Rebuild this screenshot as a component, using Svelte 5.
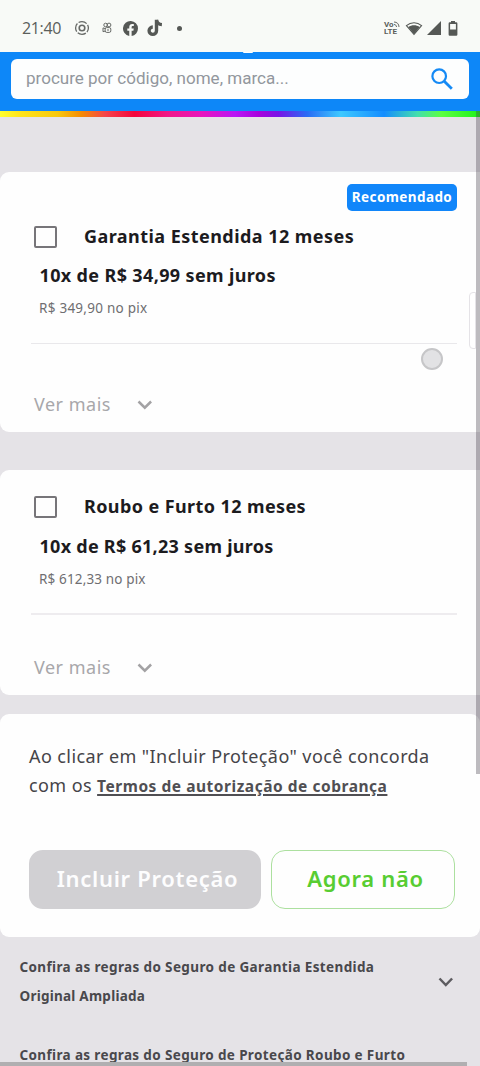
<script>
  const plans = [
    { title: 'Garantia Estendida 12 meses', price: '10x de R$ 34,99 sem juros', pix: 'R$ 349,90 no pix', tag: 'Recomendado', key: 'warranty' },
    { title: 'Roubo e Furto 12 meses', price: '10x de R$ 61,23 sem juros', pix: 'R$ 612,33 no pix', tag: '', key: 'theft' }
  ];
</script>

<div class="screen">
  <div class="status">
    <span class="time">21:40</span>
    <svg class="ring" width="16" height="16" viewBox="0 0 16 16" fill="none" stroke="#666966" stroke-width="1.3">
      <circle cx="8" cy="8" r="6.4" stroke-dasharray="8.6 1.45" stroke-dashoffset="4.3" />
      <circle cx="8" cy="8" r="2.8" stroke-width="1.6" />
    </svg>
    <svg class="kwai" width="10" height="12" viewBox="0 0 10 12" fill="none" stroke="#666966" stroke-width="1">
      <circle cx="3.6" cy="3" r="1.8" /><circle cx="7" cy="3" r="1.9" />
      <rect x="3.2" y="5.6" width="5.6" height="4.8" rx="1.5" /><path d="M3 6.5 1 5.9v3.8l2-.6M5 8h2" />
    </svg>
    <svg class="fb" width="15" height="15" viewBox="0 0 24 24" fill="#555855">
      <path d="M24 12a12 12 0 1 0-14 11.9v-8.4H6.9V12H10V9.4c0-3 1.8-4.7 4.6-4.7 1.3 0 2.7.2 2.7.2v3h-1.5c-1.5 0-2 .9-2 1.9V12h3.4l-.6 3.5h-2.8v8.4A12 12 0 0 0 24 12z" />
    </svg>
    <svg class="tiktok" width="16" height="18" viewBox="0 0 16 18" fill="none" stroke="#555855">
      <path d="M9.500 .8v10.900a3.700 3.700 0 1 1-3.700-3.700" stroke-width="3.400" />
      <path d="M9.500 1c.4 2.800 2.500 4.500 5.400 4.700" stroke-width="3.300" />
    </svg>
    <i class="dot"></i>
    <span class="volte"><span>Vo<svg width="6" height="6" viewBox="0 0 6 6" fill="none" stroke="#666966"><path d="M0 1c3 0 5 2 5 5M0 3.500c1.500 0 2.500 1 2.500 2.500" /></svg></span><span>LTE</span></span>
    <svg class="wifi" width="18" height="15" viewBox="0 0 18 15">
      <path d="M1.400 4.600c4.600-3.900 10.600-3.900 15.200 0L9 13.400z" fill="none" stroke="#555855" stroke-width="1.100" />
      <path d="M3.200 5.900c3.600-2.300 8-2.300 11.600 0L9 13z" fill="#555855" />
    </svg>
    <svg class="signal" width="14" height="14" viewBox="0 0 14 14"><path d="M14 0v14H0z" fill="#555855" /></svg>
    <svg class="battery" width="10" height="15" viewBox="0 0 10 15" fill="#555855">
      <path fill-rule="evenodd" d="M3 0h4v1.300h1.200q1.200 0 1.200 1.200v11q0 1.200-1.200 1.200H1.800q-1.200 0-1.200-1.200v-11q0-1.200 1.200-1.200H3zM2.100 2.900v5.700h5.800V2.900z" />
    </svg>
  </div>

  <header>
    <i class="nub"></i>
    <div class="search">
      <span>procure por código, nome, marca...</span>
      <svg width="22" height="22" viewBox="0 0 22 22" fill="none" stroke="#158af5">
        <circle cx="8.200" cy="8.200" r="6.800" stroke-width="2.200" /><path d="m13 13 7.800 7.800" stroke-width="2.800" />
      </svg>
    </div>
  </header>
  <div class="rainbow"></div>

  <main>
    {#each plans as p}
      <section class="card {p.key}">
        <div class="tagrow">{#if p.tag}<span class="tag"><span>{p.tag}</span></span>{/if}</div>
        <div class="pick"><i class="box"></i><h2>{p.title}</h2></div>
        <p class="price">{p.price}</p>
        <p class="pix">{p.pix}</p>
        <hr />
        <div class="more">
          <span>Ver mais</span>
          <svg width="16" height="10" viewBox="0 0 16 10" fill="none" stroke="#a3a2a4" stroke-width="2.500"><path d="m1.500 1.500 6.300 6.200 6.300-6.200" /></svg>
        </div>
      </section>
    {/each}

    <section class="card consent">
      <p class="l1">Ao clicar em "Incluir Proteção" você concorda</p>
      <p class="l2"><span>com os</span> <a href="#termos">Termos de autorização de cobrança</a></p>
      <div class="actions">
        <button class="include"><span>Incluir Proteção</span></button>
        <button class="later"><span>Agora não</span></button>
      </div>
    </section>

    <div class="rule">
      <div>
        <p class="r1">Confira as regras do Seguro de Garantia Estendida</p>
        <p class="r2">Original Ampliada</p>
      </div>
      <svg width="16" height="11" viewBox="0 0 16 11" fill="none" stroke="#5d5c60" stroke-width="2.500"><path d="m1.500 1.500 6.300 6.500 6.300-6.500" /></svg>
    </div>
    <p class="rule-next">Confira as regras do Seguro de Proteção Roubo e Furto</p>
  </main>

  <i class="vbar"></i>
  <i class="handle"></i>
  <i class="touch"></i>
  <i class="hbar"></i>
</div>

<style>
  :global(body) { margin: 0; overflow: hidden; }
  * { box-sizing: border-box; }
  .screen { position: relative; width: 480px; height: 1066px; overflow: hidden; background: #e5e3e7; font-family: "Noto Sans", sans-serif; color: #1c1b1e; white-space: nowrap; }
  p, h2 { margin: 0; }
  svg, i { display: block; flex: none; }
  .status { height: 52px; background: #f8faf7; display: flex; align-items: center; padding: 4px 22px 0; color: #5b5e5b; }
  .time { font: 400 16px/20px "Open Sans", sans-serif; width: 52px; letter-spacing: -.35px; }
  .kwai { margin-left: 12px; }
  .fb { margin-left: 11px; }
  .tiktok { margin-left: 9px; }
  .dot { width: 5px; height: 5px; border-radius: 50%; background: #555855; margin-left: 14px; }
  .volte { margin-left: auto; width: 17px; font: 700 8px/7.500px Roboto, sans-serif; display: flex; flex-direction: column; }
  .volte > span { display: flex; }
  .wifi { margin-left: 4px; }
  .signal { margin-left: 4px; }
  .battery { margin-left: 7px; }
  header { position: relative; height: 59px; background: #0d87f8; padding: 7px 11px 0; }
  .nub { position: absolute; left: 243px; top: 0; width: 10px; height: 1px; border-radius: 0 0 5px 5px; background: #fff; }
  .search { height: 40px; border-radius: 6px; background: #fdfefe; padding: 0 16px 0 15px; display: flex; align-items: center; justify-content: space-between; font: 400 17.050px/20px Roboto, sans-serif; color: #92979d; }
  .search span { margin-top: -2px; }
  .rainbow { height: 6px; background: linear-gradient(90deg, #ffff30 0, #ffe51a 4%, #f8c80c 12%, #f48a04 17%, #f5434a 22%, #f3053c 28%, #f01888 35%, #e815bd 42%, #b817f5 49%, #a702dc 54%, #7913e6 58%, #296cf5 64%, #3dc9ff 71%, #148dff 80%, #43dfac 87%, #5cff41 92%, #20f21a 100%); }
  main { padding-top: 55px; }
  .card { background: #fefefe; border-radius: 9px 0 0 9px; }
  .card.warranty { height: 260px; padding: 12px 23px 0 31px; }
  .card.theft { height: 225px; margin-top: 37.500px; padding: 25.500px 23px 0 31px; }
  .tagrow { display: flex; justify-content: flex-end; }
  .warranty .tagrow { height: 41px; }
  .tag { width: 110px; height: 27px; border-radius: 5px; background: #1186fa; color: #fff; display: grid; place-items: center; font-weight: 700; font-size: 13.500px; line-height: 27px; letter-spacing: .4px; }
  .pick { display: flex; align-items: center; height: 24px; padding-left: 3px; }
  .box { width: 23px; height: 22px; border: 2px solid #777579; border-radius: 2px; }
  h2 { margin: -2px 0 0 27px; font-size: 18px; font-weight: 700; line-height: 24px; letter-spacing: .45px; }
  .theft h2 { letter-spacing: .4px; margin-top: -2px; }
  .price { margin: 14px 0 0 8.500px; font-size: 18px; font-weight: 700; line-height: 24px; letter-spacing: .36px; }
  .theft .price { letter-spacing: .27px; margin-top: 15px; }
  .pix { margin: 12px 0 0 8px; font-size: 13.500px; line-height: 18px; letter-spacing: .26px; color: #6f6e71; }
  .theft .pix { letter-spacing: .14px; }
  hr { border: 0; height: 1px; background: #e9e8eb; margin: 26px 0 0; }
  .theft hr { height: 2px; background: #eeecef; margin-top: 25px; }
  .more { display: flex; align-items: center; height: 24px; margin-top: 49px; padding-left: 3px; color: #a8a7aa; font-size: 18px; letter-spacing: .5px; }
  .more span { width: 103px; margin-top: -3px; }
  .theft .more { margin-top: 40.500px; }
  .theft .more span { margin-top: -2px; }
  .consent { height: 223.500px; margin-top: 19px; border-radius: 9px; padding: 27.500px 25px 0 29px; color: #454448; }
  .consent p { height: 30px; line-height: 30px; font-size: 18px; letter-spacing: .41px; }
  .consent a { color: #504f53; font-weight: 700; font-size: 15.500px; letter-spacing: .53px; text-underline-offset: 2px; text-decoration-thickness: 1.500px; }
  .consent .l2 { height: 29px; line-height: 29px; }
  .actions { display: flex; gap: 10px; margin-top: 50px; }
  button { height: 59px; border-radius: 14px; border: 0; padding: 0 0 3px 5px; font: 600 22px/30px "Noto Sans", sans-serif; letter-spacing: .7px; }
  .include { width: 232px; background: #d1d0d3; color: #fdfdfe; }
  .later { width: 184px; background: transparent; border: 1px solid #ace09f; color: #58cd32; }
  .rule { height: 88px; padding: 16px 26px 0 19.500px; display: flex; justify-content: space-between; font-size: 13.500px; font-weight: 700; color: #49484c; }
  .r1 { letter-spacing: .37px; }
  .r2 { letter-spacing: .24px; }
  .rule p { line-height: 29px; }
  .rule svg { margin-top: 24px; }
  .rule-next { margin: 15.500px 0 0 19.500px; line-height: 29px; font-size: 13.500px; font-weight: 700; letter-spacing: .36px; color: #49484c; }
  .vbar { position: absolute; left: 476px; top: 111px; width: 4px; height: 663px; background: rgba(65, 60, 70, .34); }
  .handle { position: absolute; left: 469px; top: 292px; width: 7px; height: 57px; border: 1px solid #e5e3e7; border-radius: 4px 0 0 4px; background: #fff; }
  .touch { position: absolute; left: 421px; top: 348px; width: 22px; height: 22px; border-radius: 50%; border: 2px solid #c6c6c8; background: #e2e2e4; }
  .hbar { position: absolute; left: 0; top: 1062px; width: 467px; height: 4px; background: #b0afb1; }
</style>
